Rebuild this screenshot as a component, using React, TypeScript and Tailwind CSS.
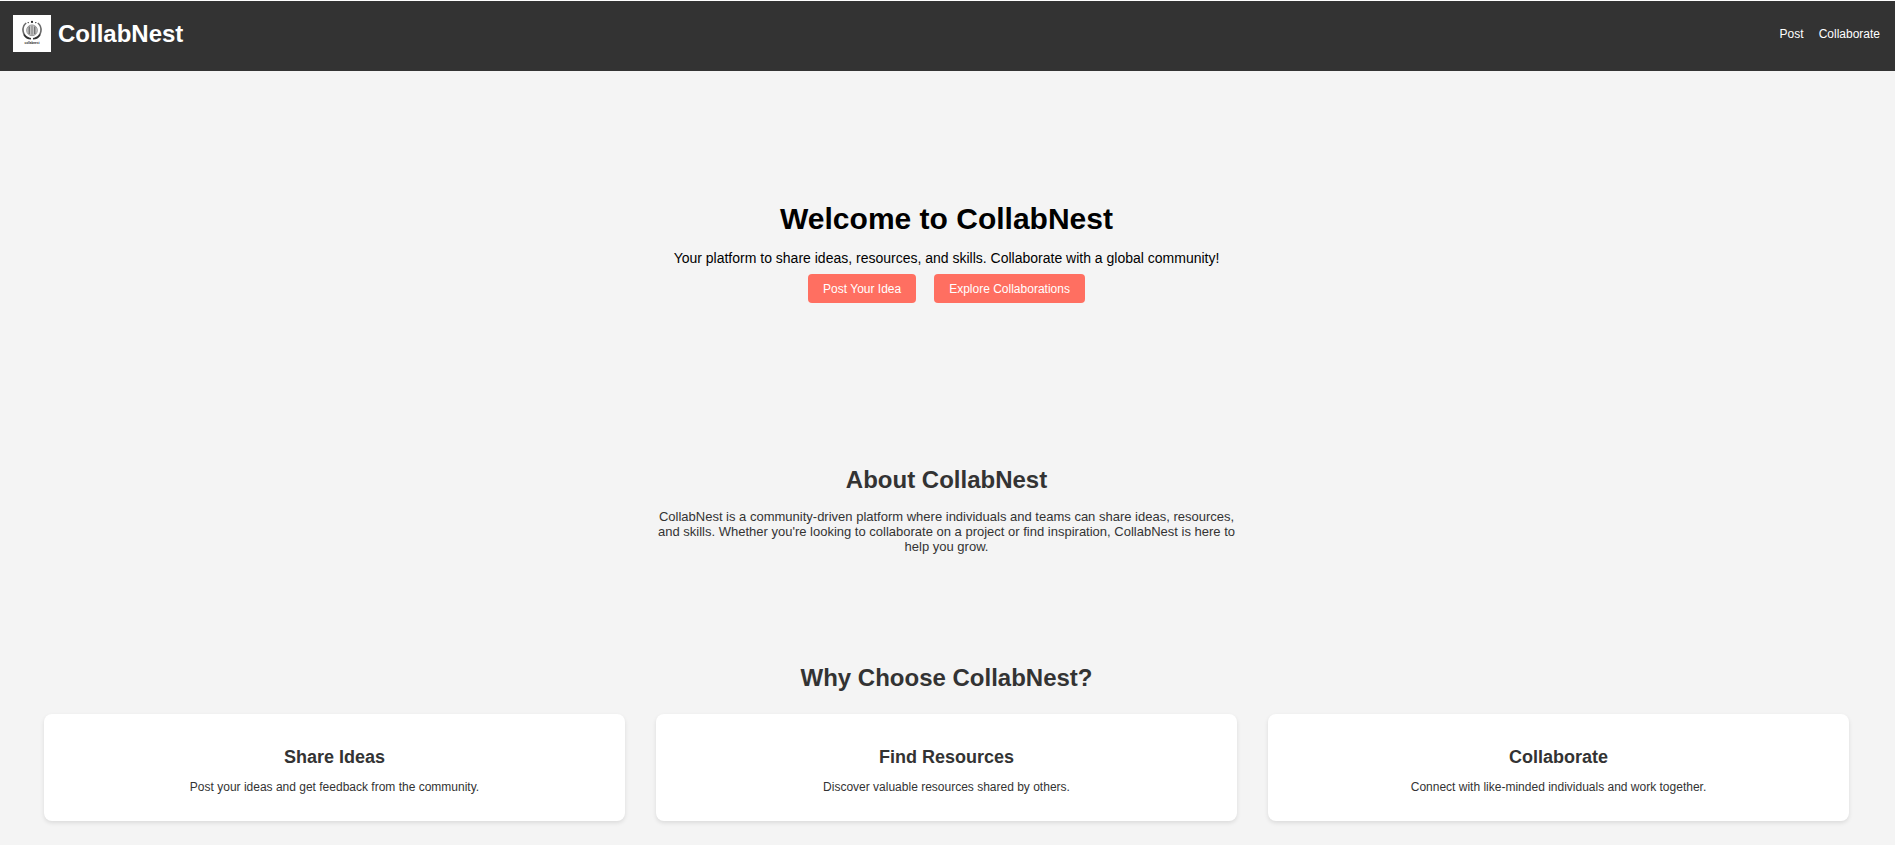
import React from "react";

const features = [
  { title: "Share Ideas", text: "Post your ideas and get feedback from the community." },
  { title: "Find Resources", text: "Discover valuable resources shared by others." },
  { title: "Collaborate", text: "Connect with like-minded individuals and work together." },
];

function Logo() {
  return (
    <svg viewBox="0 0 38 37" className="h-[37px] w-[38px] bg-white" role="img" aria-label="CollabNest logo">
      <circle cx="19" cy="15.3" r="5.4" fill="#c4c4c4" stroke="#8a8a8a" strokeWidth="0.8" />
      <g fill="none">
        <path d="M13.2 8C8.2 12 9 20.5 15.8 23.3" stroke="#6a6a6a" strokeWidth="1.6" />
        <path d="M24.8 8C29.8 12 29 20.5 22.2 23.3" stroke="#6a6a6a" strokeWidth="1.6" />
        <path d="M11 19.5Q13.4 23.6 18 23.8M27 19.5Q24.6 23.6 20 23.8" stroke="#333" strokeWidth="1.5" />
        <path d="M16.2 11.5v7.6M21.8 11.5v7.6" stroke="#555" strokeWidth="1" />
        <path d="M19 10.8v9" stroke="#999" strokeWidth="1.6" />
      </g>
      <g fill="#222">
        <circle cx="19" cy="6.9" r="1.1" />
        <circle cx="15.2" cy="7.6" r="0.7" />
        <circle cx="22.8" cy="7.6" r="0.7" />
      </g>
      <text x="19" y="28.6" textAnchor="middle" fontSize="3" fontWeight="700" fill="#222">
        collabnest
      </text>
    </svg>
  );
}

export default function App() {
  return (
    <div className="min-h-screen border-t border-r border-white bg-[#f4f4f4] font-['Liberation_Sans',Arial,sans-serif] text-xs text-[#333]">
      <header className="flex h-[70px] items-start justify-between bg-[#333] px-[13px] pt-[14px] text-white">
        <div className="flex items-center gap-[7px]">
          <Logo />
          <span className="text-2xl font-bold">CollabNest</span>
        </div>
        <nav className="flex h-[37px] items-center gap-[15px] pr-[2px]">
          <a href="#post">Post</a>
          <a href="#collaborate">Collaborate</a>
        </nav>
      </header>

      <main className="pr-[2px] text-center">
        <section className="px-8 pt-[130px] pb-32 text-black">
          <h1 className="text-3xl leading-9 font-bold">Welcome to CollabNest</h1>
          <p className="mt-[13px] text-sm leading-4">
            Your platform to share ideas, resources, and skills. Collaborate with a global community!
          </p>
          <div className="mt-2 flex justify-center gap-[18px] text-white">
            <button type="button" className="h-[29px] rounded-[4px] bg-[#ff6f61] px-[15px]">
              Post Your Idea
            </button>
            <button type="button" className="h-[29px] rounded-[4px] bg-[#ff6f61] px-[15px]">
              Explore Collaborations
            </button>
          </div>
        </section>

        <section className="px-8 pt-[31px]">
          <h2 className="text-2xl leading-9 font-bold">About CollabNest</h2>
          <p className="mx-auto mt-[11px] max-w-[600px] text-[13px] leading-[15px]">
            CollabNest is a community-driven platform where individuals and teams can share ideas, resources, and
            skills. Whether you're looking to collaborate on a project or find inspiration, CollabNest is here to help
            you grow.
          </p>
        </section>

        <section className="px-11 pt-[106px] pb-6">
          <h2 className="text-2xl leading-9 font-bold">Why Choose CollabNest?</h2>
          <div className="mt-[18px] grid grid-cols-3 gap-[31px]">
            {features.map((feature) => (
              <article
                key={feature.title}
                className="rounded-lg bg-white px-5 pt-[33px] pb-[26px] shadow-[0_2px_4px_rgba(0,0,0,0.1)]"
              >
                <h3 className="text-lg leading-5 font-bold">{feature.title}</h3>
                <p className="mt-3 leading-4">{feature.text}</p>
              </article>
            ))}
          </div>
        </section>
      </main>
    </div>
  );
}
